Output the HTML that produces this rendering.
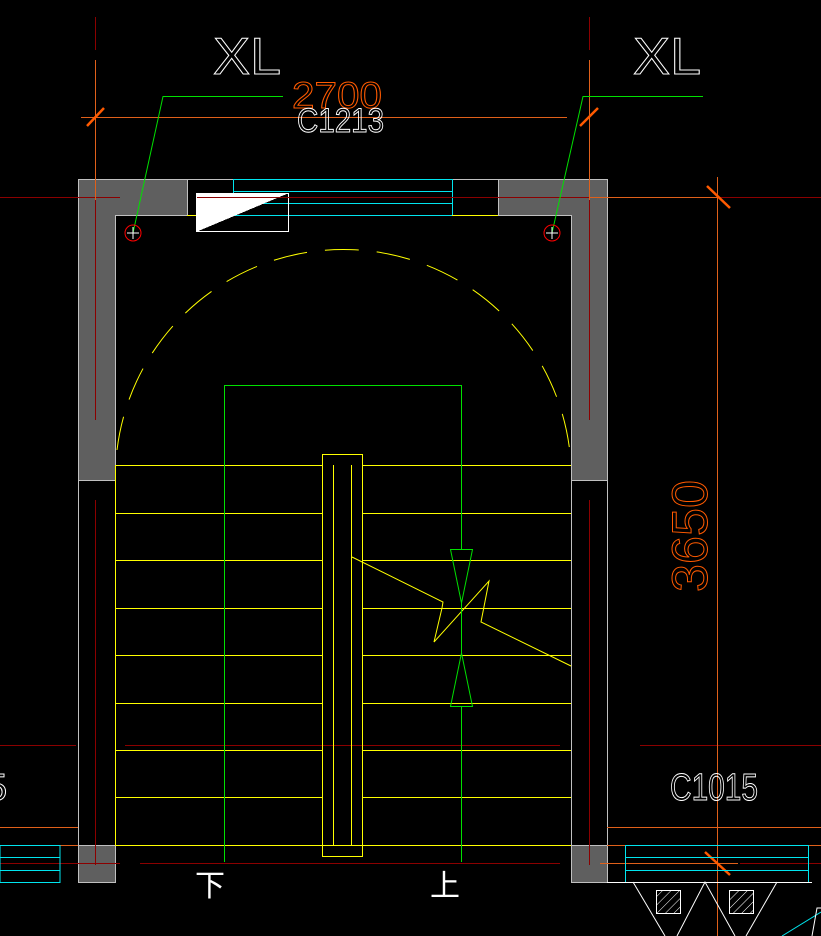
<!DOCTYPE html>
<html><head><meta charset="utf-8"><style>
html,body{margin:0;padding:0;background:#000;width:821px;height:936px;overflow:hidden}
svg{display:block}
text{font-family:"Liberation Sans","Noto Sans CJK SC",sans-serif}
</style></head><body>
<svg width="821" height="936" viewBox="0 0 821 936" xmlns="http://www.w3.org/2000/svg" shape-rendering="crispEdges">
<defs>
<pattern id="h" width="6" height="6" patternUnits="userSpaceOnUse" patternTransform="rotate(45)"><line x1="0" y1="0" x2="0" y2="6" stroke="#fff" stroke-width="1"/></pattern>
</defs>
<g fill="#5f5f5f" stroke="#c0c0c0" stroke-width="1">
<path d="M78.5 179.5H187.5V215.5H115.5V480.5H78.5Z"/>
<path d="M498.5 179.5H607.5V480.5H571.5V215.5H498.5Z"/>
<rect x="78.5" y="845.5" width="37" height="37"/>
<rect x="571.5" y="845.5" width="36" height="37"/>
</g>
<g stroke="#c0c0c0" stroke-width="1">
<line x1="78.5" y1="480" x2="78.5" y2="845"/>
<line x1="607.5" y1="480" x2="607.5" y2="845"/>
<line x1="571.5" y1="480" x2="571.5" y2="845"/>
<line x1="187.5" y1="179.5" x2="498.5" y2="179.5"/>
</g>
<g stroke="#00e5ee" stroke-width="1" fill="none">
<rect x="233.5" y="179.5" width="219" height="36"/>
<line x1="233" y1="191.5" x2="452" y2="191.5"/>
<line x1="233" y1="203.5" x2="452" y2="203.5"/>
</g>
<line x1="187" y1="215.5" x2="233" y2="215.5" stroke="#ff0"/>
<line x1="452" y1="215.5" x2="498" y2="215.5" stroke="#ff0"/>
<rect x="196.5" y="193.5" width="92" height="38" fill="none" stroke="#fff"/>
<polygon points="196,193 289,193 196,232" fill="#fff"/>
<g stroke="#8b0000" stroke-width="1">
<line x1="0" y1="197.5" x2="120" y2="197.5"/>
<line x1="197" y1="197.5" x2="589" y2="197.5"/>
<line x1="717" y1="197.5" x2="821" y2="197.5"/>
<line x1="95.5" y1="200" x2="95.5" y2="420"/>
<line x1="95.5" y1="500" x2="95.5" y2="865"/>
<line x1="589.5" y1="200" x2="589.5" y2="420"/>
<line x1="589.5" y1="500" x2="589.5" y2="865"/>
<line x1="95.5" y1="17" x2="95.5" y2="50"/>
<line x1="589.5" y1="17" x2="589.5" y2="50"/>
<line x1="0" y1="745.5" x2="76" y2="745.5"/>
<line x1="125" y1="745.5" x2="560" y2="745.5"/>
<line x1="640" y1="745.5" x2="821" y2="745.5"/>
<line x1="0" y1="863.5" x2="120" y2="863.5"/>
<line x1="140" y1="863.5" x2="560" y2="863.5"/>
<line x1="740" y1="863.5" x2="821" y2="863.5"/>
</g>
<g stroke="#e0601a" stroke-width="1">
<line x1="95.5" y1="60" x2="95.5" y2="200"/>
<line x1="589.5" y1="60" x2="589.5" y2="200"/>
<line x1="81" y1="117.5" x2="567" y2="117.5"/>
<line x1="589" y1="197.5" x2="717" y2="197.5"/>
<line x1="717.5" y1="177" x2="717.5" y2="936"/>
<line x1="0" y1="827.5" x2="78" y2="827.5"/>
<line x1="607" y1="827.5" x2="821" y2="827.5"/>
<line x1="0" y1="845.5" x2="78" y2="845.5"/>
<line x1="607" y1="845.5" x2="821" y2="845.5"/>
<line x1="600" y1="863.5" x2="738" y2="863.5"/>
</g>
<g stroke="#ff5a00" stroke-width="2.5" shape-rendering="auto">
<line x1="87" y1="126" x2="104" y2="108"/>
<line x1="580" y1="126" x2="598" y2="108"/>
<line x1="707" y1="186" x2="730" y2="208"/>
<line x1="705" y1="852" x2="730" y2="875"/>
</g>
<g stroke="#ff0" stroke-width="1" fill="none">
<line x1="115.5" y1="465" x2="115.5" y2="845"/>
<g>
<line x1="115" y1="465.5" x2="322" y2="465.5"/><line x1="362" y1="465.5" x2="571" y2="465.5"/>
<line x1="115" y1="513.5" x2="322" y2="513.5"/><line x1="362" y1="513.5" x2="571" y2="513.5"/>
<line x1="115" y1="560.5" x2="322" y2="560.5"/><line x1="362" y1="560.5" x2="571" y2="560.5"/>
<line x1="115" y1="608.5" x2="322" y2="608.5"/><line x1="362" y1="608.5" x2="571" y2="608.5"/>
<line x1="115" y1="655.5" x2="322" y2="655.5"/><line x1="362" y1="655.5" x2="571" y2="655.5"/>
<line x1="115" y1="703.5" x2="322" y2="703.5"/><line x1="362" y1="703.5" x2="571" y2="703.5"/>
<line x1="115" y1="750.5" x2="322" y2="750.5"/><line x1="362" y1="750.5" x2="571" y2="750.5"/>
<line x1="115" y1="797.5" x2="322" y2="797.5"/><line x1="362" y1="797.5" x2="571" y2="797.5"/>
<line x1="115" y1="845.5" x2="571" y2="845.5"/>
</g>
<rect x="322.5" y="454.5" width="40" height="402"/>
<line x1="333.5" y1="465" x2="333.5" y2="845"/>
<line x1="351.5" y1="465" x2="351.5" y2="845"/>
<polyline shape-rendering="auto" points="352,557 443,602 442,608 434,642 489,581 481,622 571,666"/>
<path shape-rendering="auto" d="M117 450 A228 228 0 0 1 571 465" stroke-dasharray="34 18"/>
</g>
<g stroke="#00e000" stroke-width="1" fill="none">
<polyline points="224.5,862 224.5,385.5 461.5,385.5 461.5,549"/>
<line x1="461.5" y1="603" x2="461.5" y2="653"/>
<line x1="461.5" y1="706" x2="461.5" y2="862"/>
<polygon shape-rendering="auto" points="450.5,549.5 472.5,549.5 461.5,603"/>
<polygon shape-rendering="auto" points="450.5,706.5 472.5,706.5 461.5,653"/>
<polyline shape-rendering="auto" points="133,233 163,96.5 283,96.5"/>
<polyline shape-rendering="auto" points="552,233 583,96.5 703,96.5"/>
</g>
<g shape-rendering="auto">
<circle cx="133" cy="233" r="8" fill="none" stroke="#f00"/>
<circle cx="552" cy="233" r="8" fill="none" stroke="#f00"/>
<path d="M127 233H139M133 227V239M546 233H558M552 227V239" stroke="#fff"/>
</g>
<g stroke="#00e5ee" fill="none">
<rect x="0" y="845.5" width="60" height="37"/>
<line x1="0" y1="857.5" x2="60" y2="857.5"/><line x1="0" y1="870.5" x2="60" y2="870.5"/>
<rect x="625.5" y="845.5" width="183" height="37"/>
<line x1="625" y1="857.5" x2="808" y2="857.5"/><line x1="625" y1="870.5" x2="808" y2="870.5"/>
<line shape-rendering="auto" x1="782" y1="936" x2="821" y2="912"/>
</g>
<g stroke="#fff" fill="none" shape-rendering="auto">
<line x1="607" y1="882.5" x2="812" y2="882.5"/>
<polyline points="633,882 665,936"/>
<polyline points="677,936 705,882 735,936"/>
<polyline points="746,936 777,882"/>
<rect x="656.5" y="890.5" width="24" height="23" fill="url(#h)"/>
<rect x="729.5" y="890.5" width="24" height="23" fill="url(#h)"/>
<polyline points="812,936 817,908 821,908"/>
</g>
<g>
<text x="213" y="74" fill="none" stroke="#fff" stroke-width="1" font-size="52" textLength="68" lengthAdjust="spacingAndGlyphs">XL</text>
<text x="633" y="74" fill="none" stroke="#fff" stroke-width="1" font-size="52" textLength="68" lengthAdjust="spacingAndGlyphs">XL</text>
<text x="292" y="108" fill="none" stroke="#ff5a00" stroke-width="1" font-size="37" textLength="90" lengthAdjust="spacingAndGlyphs">2700</text>
<text x="297" y="132" fill="none" stroke="#fff" stroke-width="1" font-size="34" textLength="87" lengthAdjust="spacingAndGlyphs">C1213</text>
<text x="670" y="800" fill="none" stroke="#fff" stroke-width="1" font-size="38" textLength="88" lengthAdjust="spacingAndGlyphs">C1015</text>
<text x="-14" y="800" fill="none" stroke="#fff" stroke-width="1" font-size="38">5</text>
<text transform="translate(707,592) rotate(-90)" fill="none" stroke="#ff5a00" stroke-width="1" font-size="50" textLength="112" lengthAdjust="spacingAndGlyphs">3650</text>
<text x="195" y="896" fill="#fff" font-size="30">下</text>
<text x="430" y="896" fill="#fff" font-size="30">上</text>
</g>
</svg>
</body></html>
